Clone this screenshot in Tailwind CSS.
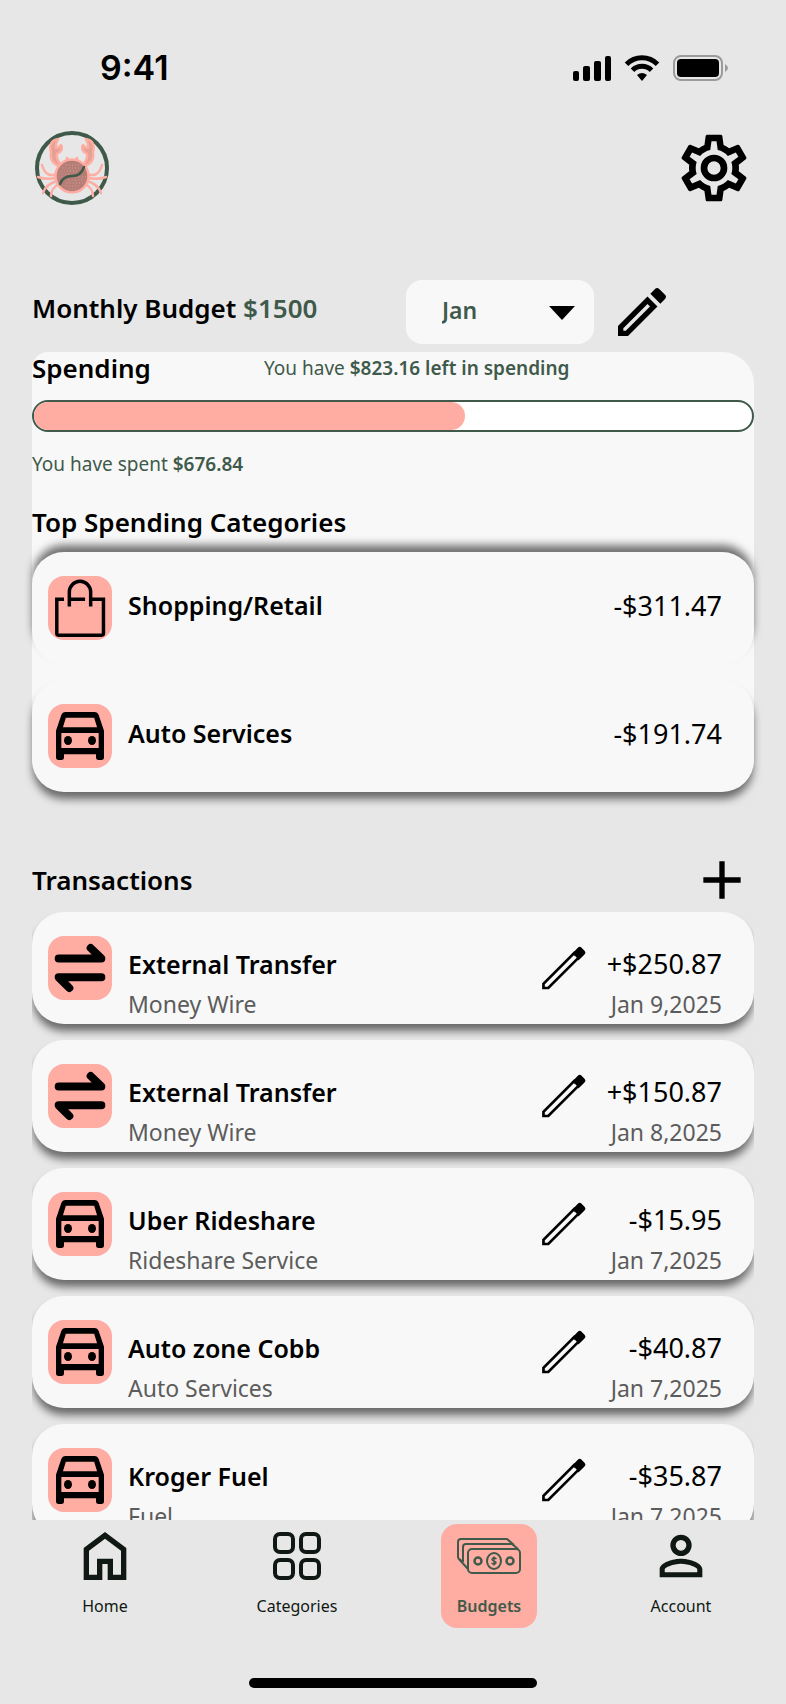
<!DOCTYPE html>
<html lang="en">
<head>
  <meta charset="UTF-8" />
  <meta name="viewport" content="width=device-width, initial-scale=1.0"/>
  <title>Budgets</title>
  <script src="https://cdn.jsdelivr.net/npm/@tailwindcss/browser@4"></script>
</head>
<body class="h-screen flex flex-col overflow-hidden bg-[#e7e7e7] text-black font-['Noto_Sans',sans-serif]">

  <!-- shared icons -->
  <svg class="hidden">
    <symbol id="icon-car" viewBox="0 0 24 24">
      <path fill-rule="evenodd" d="M6.6 3H17.4Q18.6 3 19 4.1L21 10V20.2Q21 21 20.2 21H18.8Q18 21 18 20.2V18.8H6V20.2Q6 21 5.2 21H3.8Q3 21 3 20.2V10L5 4.1Q5.4 3 6.6 3ZM6.7 5.2L5.6 8.7H18.4L17.3 5.2ZM5 10.9V16.5H19V10.9Z"/>
      <ellipse cx="7.5" cy="13.7" rx="1.5" ry="1.7"/>
      <ellipse cx="16.5" cy="13.7" rx="1.5" ry="1.7"/>
    </symbol>
    <symbol id="icon-bag" viewBox="0 0 24 24">
      <g fill="none" stroke="#000" stroke-width="1.3">
        <path d="M6 8.7H3.3V21.6Q3.3 22.2 3.9 22.2H20.1Q20.8 22.2 20.8 21.6V8.7H16.1M7.9 8.7H13.9"/>
        <path d="M8 11.4V6A4 4 0 0 1 16 6V11.4"/>
      </g>
    </symbol>
    <symbol id="icon-transfer" viewBox="0 0 24 24">
      <path d="M4 8.4H20L16 4.5M20 15.5H4L8 19.5" fill="none" stroke="#000" stroke-width="3" stroke-linecap="round" stroke-linejoin="round"/>
    </symbol>
    <symbol id="icon-pencil-thin" viewBox="0 0 24 24">
      <path d="M4.3 19.5V17.9L15.8 6.4L17.5 8.1L6.1 19.5Z" fill="none" stroke="#000" stroke-width="1"/>
      <path d="M14.700 6.900L17.200 4.400Q17.900 3.700 18.600 4.400L19.700 5.500Q20.400 6.200 19.700 6.900L17.400 9.200Q17 7.200 14.700 6.900Z"/>
    </symbol>
  </svg>

  <!-- status bar -->
  <div class="shrink-0 mt-12 h-10 pl-25 pr-[54px] flex items-center justify-between">
    <span class="font-['Inter',sans-serif] font-semibold text-[34px] leading-10">9:41</span>
    <div class="flex items-center gap-3">
      <svg class="w-10 h-7" viewBox="0 0 40 28">
        <rect x="1" y="17" width="6" height="10" rx="2"/>
        <rect x="11" y="12" width="7" height="15" rx="2"/>
        <rect x="22" y="7" width="7" height="20" rx="2"/>
        <rect x="33" y="2" width="6" height="25" rx="2"/>
      </svg>
      <svg class="w-9 h-7" viewBox="0 0 36 28" fill="none" stroke="#000" stroke-width="5">
        <path d="M2.500 10.200A22 22 0 0 1 33.500 10.200"/>
        <path d="M8.500 16.200A13.500 13.500 0 0 1 27.500 16.200"/>
        <path d="M18 27L13 21Q18 17 23 21Z" fill="#000" stroke="none"/>
      </svg>
      <svg class="w-15 h-7" viewBox="0 0 60 28">
        <rect x="2" y="2" width="48" height="24" rx="7" fill="none" stroke="#9b9b9b" stroke-width="2"/>
        <rect x="5" y="5" width="42" height="18" rx="4"/>
        <path d="M53 10Q56 12 56 14T53 18Z" fill="#9b9b9b"/>
      </svg>
    </div>
  </div>

  <header class="shrink-0 mt-10 px-8 flex items-center justify-between">
    <a href="#" aria-label="Home page">
      <svg class="w-20 h-20" viewBox="0 0 80 80" fill="none" stroke-linecap="round" stroke-linejoin="round">
        <circle cx="40" cy="40" r="35" stroke="#3f5a4a" stroke-width="4"/>
        <g stroke="#ffaca2" stroke-width="2.500">
          <path d="M24 47H18Q12 45 10 37M24 50Q14 52 6 49M25 53Q14 56 11 65M27 56Q19 60 19 68"/>
          <path d="M56 47H62Q68 45 70 37M56 50Q66 52 74 49M55 53Q66 56 69 65M53 56Q61 60 61 68"/>
          <path d="M36 33L35 30M44 33L45 30"/>
        </g>
        <g fill="#e3a095" stroke="#ffaca2" stroke-width="2.500">
          <path d="M26 38Q17 33 19 24Q16 13 26 11Q23 17 24 20Q27 20 29 17Q32 22 25 26Q24 31 29 37Z"/>
          <path d="M54 38Q63 33 61 24Q64 13 54 11Q57 17 56 20Q53 20 51 17Q48 22 55 26Q56 31 51 37Z"/>
        </g>
        <circle cx="40" cy="48" r="16.500" fill="#b47d76" stroke="#ffaca2" stroke-width="2.500"/>
        <g stroke="#e6a39a" stroke-width="1" stroke-dasharray="0.100 3">
          <path d="M34 37H48M31 40H47M29 43H46M27 46H38M27 49H33M44 49H54M37 52H53M35 55H52M34 58H49M37 61H46"/>
        </g>
        <path d="M28 56Q31 48 40 48T52 39" stroke="#3f5a4a" stroke-width="2.500"/>
      </svg>
    </a>
    <button aria-label="Settings">
      <svg class="w-20 h-20" viewBox="0 0 24 24">
        <path d="M12,8A4,4 0 0,1 16,12A4,4 0 0,1 12,16A4,4 0 0,1 8,12A4,4 0 0,1 12,8M12,10A2,2 0 0,0 10,12A2,2 0 0,0 12,14A2,2 0 0,0 14,12A2,2 0 0,0 12,10M10,22C9.75,22 9.54,21.82 9.5,21.58L9.13,18.93C8.5,18.68 7.96,18.34 7.44,17.94L4.95,18.95C4.73,19.03 4.46,18.95 4.34,18.73L2.34,15.27C2.21,15.05 2.27,14.78 2.46,14.63L4.57,12.97L4.5,12L4.57,11L2.46,9.37C2.27,9.22 2.21,8.95 2.34,8.73L4.34,5.27C4.46,5.05 4.73,4.96 4.95,5.05L7.44,6.05C7.96,5.66 8.5,5.32 9.13,5.07L9.5,2.42C9.54,2.18 9.75,2 10,2H14C14.25,2 14.46,2.18 14.5,2.42L14.87,5.07C15.5,5.32 16.04,5.66 16.56,6.05L19.05,5.05C19.27,4.96 19.54,5.05 19.66,5.27L21.66,8.73C21.79,8.95 21.73,9.22 21.54,9.37L19.43,11L19.5,12L19.43,13L21.54,14.63C21.73,14.78 21.79,15.05 21.66,15.27L19.66,18.73C19.54,18.95 19.27,19.04 19.05,18.95L16.56,17.95C16.04,18.34 15.5,18.68 14.87,18.93L14.5,21.58C14.46,21.82 14.25,22 14,22H10M11.25,4L10.88,6.61C9.68,6.86 8.62,7.5 7.85,8.39L5.44,7.35L4.69,8.65L6.8,10.2C6.4,11.37 6.4,12.64 6.8,13.8L4.68,15.36L5.43,16.66L7.86,15.62C8.63,16.5 9.68,17.14 10.87,17.38L11.24,20H12.76L13.13,17.39C14.32,17.14 15.37,16.5 16.14,15.62L18.57,16.66L19.32,15.36L17.2,13.81C17.6,12.64 17.6,11.37 17.2,10.2L19.31,8.65L18.56,7.35L16.15,8.39C15.38,7.5 14.32,6.86 13.12,6.62L12.75,4H11.25Z"/>
      </svg>
    </button>
  </header>

  <main class="flex-1 min-h-0 mt-18 px-8 flex flex-col">

    <!-- budget and month -->
    <div class="shrink-0 flex items-center gap-4 pr-20">
      <h1 class="flex-1 pb-2 text-[26px] leading-8 font-semibold whitespace-nowrap">Monthly Budget <span class="text-[#3f5a4a]">$1500</span></h1>
      <div class="relative w-47">
        <select aria-label="Month" class="appearance-none w-full h-16 pl-9 pb-1 rounded-2xl bg-[#f8f8f8] text-[23px] font-semibold text-[#3f5a4a]">
          <option>Jan</option>
          <option>Feb</option>
          <option>Mar</option>
        </select>
        <svg class="absolute right-4 top-4 w-8 h-8 pointer-events-none" viewBox="0 0 32 32"><path d="M3 10H29L16 24Z"/></svg>
      </div>
      <button aria-label="Edit budget">
        <svg class="w-16 h-16" viewBox="0 0 24 24"><path d="M14.06,9L15,9.94L5.92,19H5V18.08L14.06,9M17.66,3C17.41,3 17.15,3.1 16.96,3.29L15.13,5.12L18.88,8.87L20.71,7.04C21.1,6.65 21.1,6 20.71,5.63L18.37,3.29C18.17,3.09 17.92,3 17.66,3M14.06,6.19L3,17.25V21H6.75L17.81,9.94L14.06,6.19Z"/></svg>
      </button>
    </div>

    <!-- spending -->
    <section class="shrink-0 mt-2 bg-[#f8f8f8] rounded-[32px] rounded-tl-2xl">
      <div class="flex items-center h-9">
        <h2 class="w-58 pb-1 text-[26px] leading-8 font-semibold">Spending</h2>
        <p class="pb-1 text-[19px] leading-8 text-[#3f5a4a] whitespace-nowrap">You have <b class="font-semibold">$823.16 left in spending</b></p>
      </div>
      <div class="mt-3 h-8 rounded-full border-2 border-[#3f5a4a] bg-white overflow-hidden" role="progressbar" aria-label="Spent" aria-valuenow="60">
        <div class="h-full rounded-r-full bg-[#ffaca2]" style="width: 60%"></div>
      </div>
      <p class="mt-4 text-[19px] leading-8 text-[#3f5a4a]">You have spent <b class="font-semibold">$676.84</b></p>
      <h2 class="mt-6 mb-3 text-[26px] leading-9 font-semibold">Top Spending Categories</h2>

      <ul class="flex flex-col gap-4">
        <li class="h-28 pl-4 pr-8 flex items-center gap-4 rounded-[32px] bg-[#f8f8f8] shadow-[0_-8px_8px_-1px_rgba(0,0,0,0.55)]">
          <span class="w-16 h-16 rounded-2xl bg-[#ffaca2]"><svg class="w-16 h-16"><use href="#icon-bag"/></svg></span>
          <span class="flex-1 pb-1 text-[25px] font-semibold">Shopping/Retail</span>
          <span class="pb-1 text-[27px]">-$311.47</span>
        </li>
        <li class="h-28 pl-4 pr-8 flex items-center gap-4 rounded-[32px] bg-[#f8f8f8] shadow-[0_8px_8px_-1px_rgba(0,0,0,0.55)]">
          <span class="w-16 h-16 rounded-2xl bg-[#ffaca2]"><svg class="w-16 h-16"><use href="#icon-car"/></svg></span>
          <span class="flex-1 pb-1 text-[25px] font-semibold">Auto Services</span>
          <span class="pb-1 text-[27px]">-$191.74</span>
        </li>
      </ul>
    </section>

    <!-- transactions -->
    <div class="shrink-0 mt-14 h-16 flex items-center justify-between">
      <h2 class="text-[26px] leading-9 font-semibold">Transactions</h2>
      <button aria-label="Add transaction">
        <svg class="w-16 h-16" viewBox="0 0 24 24"><path d="M19,13H13V19H11V13H5V11H11V5H13V11H19V13Z"/></svg>
      </button>
    </div>

    <ul class="flex-1 min-h-0 overflow-hidden flex flex-col gap-4">
      <li class="shrink-0 h-28 pl-4 pr-8 flex items-center rounded-[32px] bg-[#f8f8f8] shadow-[0_8px_8px_-1px_rgba(0,0,0,0.55)]">
        <span class="w-16 h-16 mr-4 rounded-2xl bg-[#ffaca2]"><svg class="w-16 h-16"><use href="#icon-transfer"/></svg></span>
        <div class="flex-1 pt-8">
          <h3 class="text-[25px] leading-10 font-semibold">External Transfer</h3>
          <p class="text-[23px] leading-10 text-[#5c5c5c]">Money Wire</p>
        </div>
        <button aria-label="Edit transaction"><svg class="w-16 h-16"><use href="#icon-pencil-thin"/></svg></button>
        <div class="w-[126px] pt-8 text-right whitespace-nowrap">
          <p class="text-[27px] leading-10">+$250.87</p>
          <p class="text-[23px] leading-10 text-[#5c5c5c]">Jan 9,2025</p>
        </div>
      </li>
      <li class="shrink-0 h-28 pl-4 pr-8 flex items-center rounded-[32px] bg-[#f8f8f8] shadow-[0_8px_8px_-1px_rgba(0,0,0,0.55)]">
        <span class="w-16 h-16 mr-4 rounded-2xl bg-[#ffaca2]"><svg class="w-16 h-16"><use href="#icon-transfer"/></svg></span>
        <div class="flex-1 pt-8">
          <h3 class="text-[25px] leading-10 font-semibold">External Transfer</h3>
          <p class="text-[23px] leading-10 text-[#5c5c5c]">Money Wire</p>
        </div>
        <button aria-label="Edit transaction"><svg class="w-16 h-16"><use href="#icon-pencil-thin"/></svg></button>
        <div class="w-[126px] pt-8 text-right whitespace-nowrap">
          <p class="text-[27px] leading-10">+$150.87</p>
          <p class="text-[23px] leading-10 text-[#5c5c5c]">Jan 8,2025</p>
        </div>
      </li>
      <li class="shrink-0 h-28 pl-4 pr-8 flex items-center rounded-[32px] bg-[#f8f8f8] shadow-[0_8px_8px_-1px_rgba(0,0,0,0.55)]">
        <span class="w-16 h-16 mr-4 rounded-2xl bg-[#ffaca2]"><svg class="w-16 h-16"><use href="#icon-car"/></svg></span>
        <div class="flex-1 pt-8">
          <h3 class="text-[25px] leading-10 font-semibold">Uber Rideshare</h3>
          <p class="text-[23px] leading-10 text-[#5c5c5c]">Rideshare Service</p>
        </div>
        <button aria-label="Edit transaction"><svg class="w-16 h-16"><use href="#icon-pencil-thin"/></svg></button>
        <div class="w-[126px] pt-8 text-right whitespace-nowrap">
          <p class="text-[27px] leading-10">-$15.95</p>
          <p class="text-[23px] leading-10 text-[#5c5c5c]">Jan 7,2025</p>
        </div>
      </li>
      <li class="shrink-0 h-28 pl-4 pr-8 flex items-center rounded-[32px] bg-[#f8f8f8] shadow-[0_8px_8px_-1px_rgba(0,0,0,0.55)]">
        <span class="w-16 h-16 mr-4 rounded-2xl bg-[#ffaca2]"><svg class="w-16 h-16"><use href="#icon-car"/></svg></span>
        <div class="flex-1 pt-8">
          <h3 class="text-[25px] leading-10 font-semibold">Auto zone Cobb</h3>
          <p class="text-[23px] leading-10 text-[#5c5c5c]">Auto Services</p>
        </div>
        <button aria-label="Edit transaction"><svg class="w-16 h-16"><use href="#icon-pencil-thin"/></svg></button>
        <div class="w-[126px] pt-8 text-right whitespace-nowrap">
          <p class="text-[27px] leading-10">-$40.87</p>
          <p class="text-[23px] leading-10 text-[#5c5c5c]">Jan 7,2025</p>
        </div>
      </li>
      <li class="shrink-0 h-28 pl-4 pr-8 flex items-center rounded-[32px] bg-[#f8f8f8] shadow-[0_8px_8px_-1px_rgba(0,0,0,0.55)]">
        <span class="w-16 h-16 mr-4 rounded-2xl bg-[#ffaca2]"><svg class="w-16 h-16"><use href="#icon-car"/></svg></span>
        <div class="flex-1 pt-8">
          <h3 class="text-[25px] leading-10 font-semibold">Kroger Fuel</h3>
          <p class="text-[23px] leading-10 text-[#5c5c5c]">Fuel</p>
        </div>
        <button aria-label="Edit transaction"><svg class="w-16 h-16"><use href="#icon-pencil-thin"/></svg></button>
        <div class="w-[126px] pt-8 text-right whitespace-nowrap">
          <p class="text-[27px] leading-10">-$35.87</p>
          <p class="text-[23px] leading-10 text-[#5c5c5c]">Jan 7,2025</p>
        </div>
      </li>
    </ul>
  </main>

  <!-- bottom navigation -->
  <footer class="shrink-0 pt-1 pb-4">
    <nav class="grid grid-cols-4 justify-items-center px-[9px] text-[16px] leading-9 text-[#101813]">
      <a href="#" class="w-24 h-26 flex flex-col items-center">
        <svg class="w-16 h-16" viewBox="0 -960 960 960" fill="currentColor"><path d="M240-200h120v-240h240v240h120v-360L480-740 240-560v360Zm-80 80v-480l320-240 320 240v480H520v-240h-80v240H160Z"/></svg>
        Home
      </a>
      <a href="#" class="w-24 h-26 flex flex-col items-center">
        <svg class="w-16 h-16" viewBox="0 0 64 64" fill="none" stroke="currentColor" stroke-width="4">
          <rect x="10" y="10" width="18" height="18" rx="5"/>
          <rect x="36" y="10" width="18" height="18" rx="5"/>
          <rect x="10" y="36" width="18" height="18" rx="5"/>
          <rect x="36" y="36" width="18" height="18" rx="5"/>
        </svg>
        Categories
      </a>
      <a href="#" class="w-24 h-26 flex flex-col items-center rounded-2xl bg-[#ffaca2] font-semibold text-[#3f5a4a]">
        <svg class="w-16 h-16" viewBox="0 0 64 64" fill="none" stroke="currentColor" stroke-width="2">
          <path d="M1 34V18Q1 15 4 15H50L57 21M1 34L11 45M6 38V23Q6 20 9 20H55L61 25M1 34L6 38"/>
          <rect x="11" y="25" width="52" height="24" rx="4"/>
          <ellipse cx="37" cy="37" rx="7" ry="8"/>
          <circle cx="21" cy="37" r="3.500" stroke-width="2.500"/>
          <circle cx="53" cy="37" r="3.500" stroke-width="2.500"/>
          <path d="M39.500 35Q37 33 35.500 34.500T37 37T38.500 39.500T34.500 39M37 32.500V41.500" stroke-width="1.500"/>
        </svg>
        Budgets
      </a>
      <a href="#" class="w-24 h-26 flex flex-col items-center">
        <svg class="w-16 h-16" viewBox="0 0 24 24" fill="currentColor"><path d="M12,4A4,4 0 0,1 16,8A4,4 0 0,1 12,12A4,4 0 0,1 8,8A4,4 0 0,1 12,4M12,6A2,2 0 0,0 10,8A2,2 0 0,0 12,10A2,2 0 0,0 14,8A2,2 0 0,0 12,6M12,13C14.67,13 20,14.33 20,17V20H4V17C4,14.33 9.33,13 12,13M12,14.9C9.03,14.9 5.9,16.36 5.9,17V18.1H18.1V17C18.1,16.36 14.97,14.9 12,14.9Z"/></svg>
        Account
      </a>
    </nav>
    <div class="mx-auto mt-[50px] w-72 h-[10px] rounded-full bg-black"></div>
  </footer>

</body>
</html>
